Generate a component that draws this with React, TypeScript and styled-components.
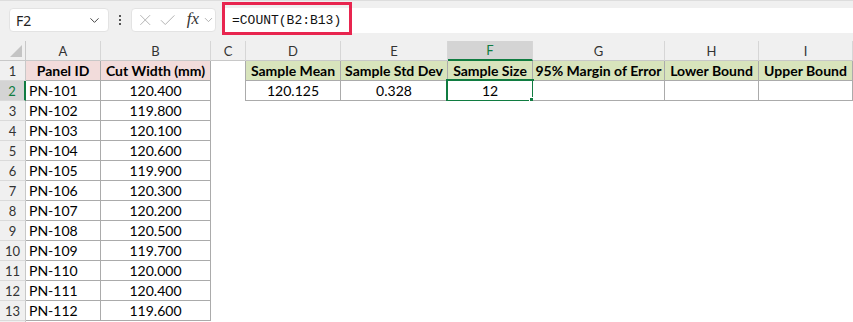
import React from "react";
import styled, { createGlobalStyle, css } from "styled-components";
import { X, Check, ChevronDown } from "lucide-react";

const GREEN = "#107c41";
const CELL_FONT = `"Lato", "Liberation Sans", sans-serif`;

const GlobalStyle = createGlobalStyle`
  html, body {
    margin: 0;
    padding: 0;
    background: #ffffff;
  }
  body {
    font-family: ${CELL_FONT};
    overflow: hidden;
  }
`;

const Page = styled.div`
  width: 853px;
  height: 322px;
  overflow: hidden;
`;

const TopBar = styled.div`
  height: 41px;
  box-sizing: border-box;
  background: #f0f0f0;
  border-top: 1px solid #dddddd;
  padding: 7px 0 0 9px;
  display: flex;
  align-items: flex-start;
`;

const NameBox = styled.div`
  width: 100px;
  height: 24px;
  box-sizing: border-box;
  background: #ffffff;
  border: 1px solid #e3e3e3;
  border-radius: 4px;
  display: flex;
  align-items: center;
  justify-content: space-between;
  padding: 0 6px 0 6px;
  font-family: "Noto Sans", "Open Sans", sans-serif;
  font-size: 14px;
  color: #222;
`;

const Dots = styled.div`
  width: 22px;
  height: 24px;
  display: flex;
  flex-direction: column;
  align-items: center;
  justify-content: center;
  gap: 2px;

  span {
    width: 2px;
    height: 2px;
    background: #555;
  }
`;

const FxBox = styled.div`
  width: 85px;
  height: 24px;
  box-sizing: border-box;
  background: #ffffff;
  border: 1px solid #e3e3e3;
  border-radius: 4px;
  display: flex;
  align-items: center;
  padding-left: 4px;
  color: #b0b0b0;
`;

const FxLabel = styled.span`
  font-family: "Liberation Serif", serif;
  font-style: italic;
  font-size: 17px;
  color: #333;
  margin-left: 9px;
  margin-top: -2px;
`;

const FormulaInput = styled.div`
  position: relative;
  flex: 1;
  margin-left: 6px;
  height: 25px;
  background: #ffffff;
  display: flex;
  align-items: center;
  padding-left: 10px;
  font-family: "Liberation Mono", monospace;
  font-size: 13px;
  color: #111;
`;

const Highlight = styled.div`
  position: absolute;
  left: 0;
  top: -6px;
  width: 130px;
  height: 33px;
  box-sizing: border-box;
  border: 3px solid #e8254f;
  pointer-events: none;
`;

const COLS = [26, 75, 110, 35, 95, 107, 85, 132, 94, 94];

const Sheet = styled.div`
  display: grid;
  grid-template-columns: ${COLS.map((c) => `${c}px`).join(" ")};
  grid-auto-rows: 20px;
  font-family: ${CELL_FONT};
`;

const headBase = css`
  box-sizing: border-box;
  background: #f0f0f0;
  color: #333;
  font-size: 13px;
  display: flex;
  align-items: center;
  justify-content: center;
`;

const Corner = styled.div`
  ${headBase};
  position: relative;
  border-right: 1px solid #c8c8c8;
  border-bottom: 1px solid #c8c8c8;

  &::after {
    content: "";
    position: absolute;
    right: 3px;
    bottom: 3px;
    border-left: 12px solid transparent;
    border-bottom: 12px solid #c4c4c4;
  }
`;

const ColHead = styled.div<{ $active?: boolean }>`
  ${headBase};
  border-right: 1px solid #d6d6d6;
  border-bottom: 1px solid #c8c8c8;
  ${(p) =>
    p.$active &&
    css`
      background: #d4d4d4;
      color: ${GREEN};
      border-bottom: 2px solid ${GREEN};
    `}
`;

const RowHead = styled.div<{ $active?: boolean }>`
  ${headBase};
  border-right: 1px solid #c8c8c8;
  border-bottom: 1px solid #dadada;
  ${(p) =>
    p.$active &&
    css`
      background: #d4d4d4;
      color: ${GREEN};
      border-right: 2px solid ${GREEN};
    `}
`;

type Fill = "pink" | "green" | "none";

const fills: Record<Fill, string> = {
  pink: "#f2dcdb",
  green: "#d8e4bc",
  none: "#ffffff",
};

const Cell = styled.div<{
  $lined?: boolean;
  $edge?: boolean;
  $fill?: Fill;
  $bold?: boolean;
  $left?: boolean;
}>`
  position: relative;
  box-sizing: border-box;
  background: ${(p) => fills[p.$fill || "none"]};
  font-size: 14px;
  font-weight: ${(p) => (p.$bold ? 700 : 400)};
  color: #000;
  display: flex;
  align-items: center;
  justify-content: ${(p) => (p.$left ? "flex-start" : "center")};
  padding: 0 3px;
  white-space: nowrap;
  ${(p) =>
    p.$lined &&
    css`
      border-right: 1px solid #ababab;
      border-bottom: 1px solid #ababab;
    `}
  ${(p) =>
    p.$edge &&
    css`
      border-right: 1px solid #ababab;
    `}
`;

const Selection = styled.div`
  position: absolute;
  left: -2px;
  top: -2px;
  right: -2px;
  bottom: -2px;
  border: 2px solid ${GREEN};
  pointer-events: none;

  &::after {
    content: "";
    position: absolute;
    right: -4px;
    bottom: -4px;
    width: 5px;
    height: 5px;
    background: ${GREEN};
    border: 1px solid #fff;
  }
`;

const letters = ["A", "B", "C", "D", "E", "F", "G", "H", "I"];

const widths = [
  "120.400",
  "119.800",
  "120.100",
  "120.600",
  "119.900",
  "120.300",
  "120.200",
  "120.500",
  "119.700",
  "120.000",
  "120.400",
  "119.600",
];

const stats = [
  "Sample Mean",
  "Sample Std Dev",
  "Sample Size",
  "95% Margin of Error",
  "Lower Bound",
  "Upper Bound",
];

const statValues = ["120.125", "0.328", "12", "", "", ""];

export default function App() {
  return (
    <Page>
      <GlobalStyle />
      <TopBar>
        <NameBox>
          <span>F2</span>
          <ChevronDown size={15} strokeWidth={1.6} color="#444" />
        </NameBox>
        <Dots>
          <span />
          <span />
          <span />
        </Dots>
        <FxBox>
          <X size={20} strokeWidth={1.2} />
          <Check size={21} strokeWidth={1.2} style={{ marginLeft: 4 }} />
          <FxLabel>fx</FxLabel>
          <ChevronDown size={14} strokeWidth={1.4} color="#999" style={{ marginLeft: 3 }} />
        </FxBox>
        <FormulaInput>
          =COUNT(B2:B13)
          <Highlight />
        </FormulaInput>
      </TopBar>

      <Sheet>
        <Corner />
        {letters.map((l) => (
          <ColHead key={l} $active={l === "F"}>
            {l}
          </ColHead>
        ))}

        <RowHead>1</RowHead>
        <Cell $lined $fill="pink" $bold>
          Panel ID
        </Cell>
        <Cell $lined $fill="pink" $bold>
          Cut Width (mm)
        </Cell>
        <Cell $edge />
        {stats.map((s) => (
          <Cell key={s} $lined $fill="green" $bold>
            {s}
          </Cell>
        ))}

        {widths.map((w, i) => {
          const row = i + 2;
          return (
            <React.Fragment key={row}>
              <RowHead $active={row === 2}>{row}</RowHead>
              <Cell $lined $left>
                PN-{101 + i}
              </Cell>
              <Cell $lined>{w}</Cell>
              {row === 2 ? (
                <>
                  <Cell $edge />
                  {statValues.map((v, j) => (
                    <Cell key={j} $lined>
                      {v}
                      {j === 2 && <Selection />}
                    </Cell>
                  ))}
                </>
              ) : (
                <>
                  <Cell />
                  <Cell />
                  <Cell />
                  <Cell />
                  <Cell />
                  <Cell />
                  <Cell />
                </>
              )}
            </React.Fragment>
          );
        })}
        <RowHead />
      </Sheet>
    </Page>
  );
}
